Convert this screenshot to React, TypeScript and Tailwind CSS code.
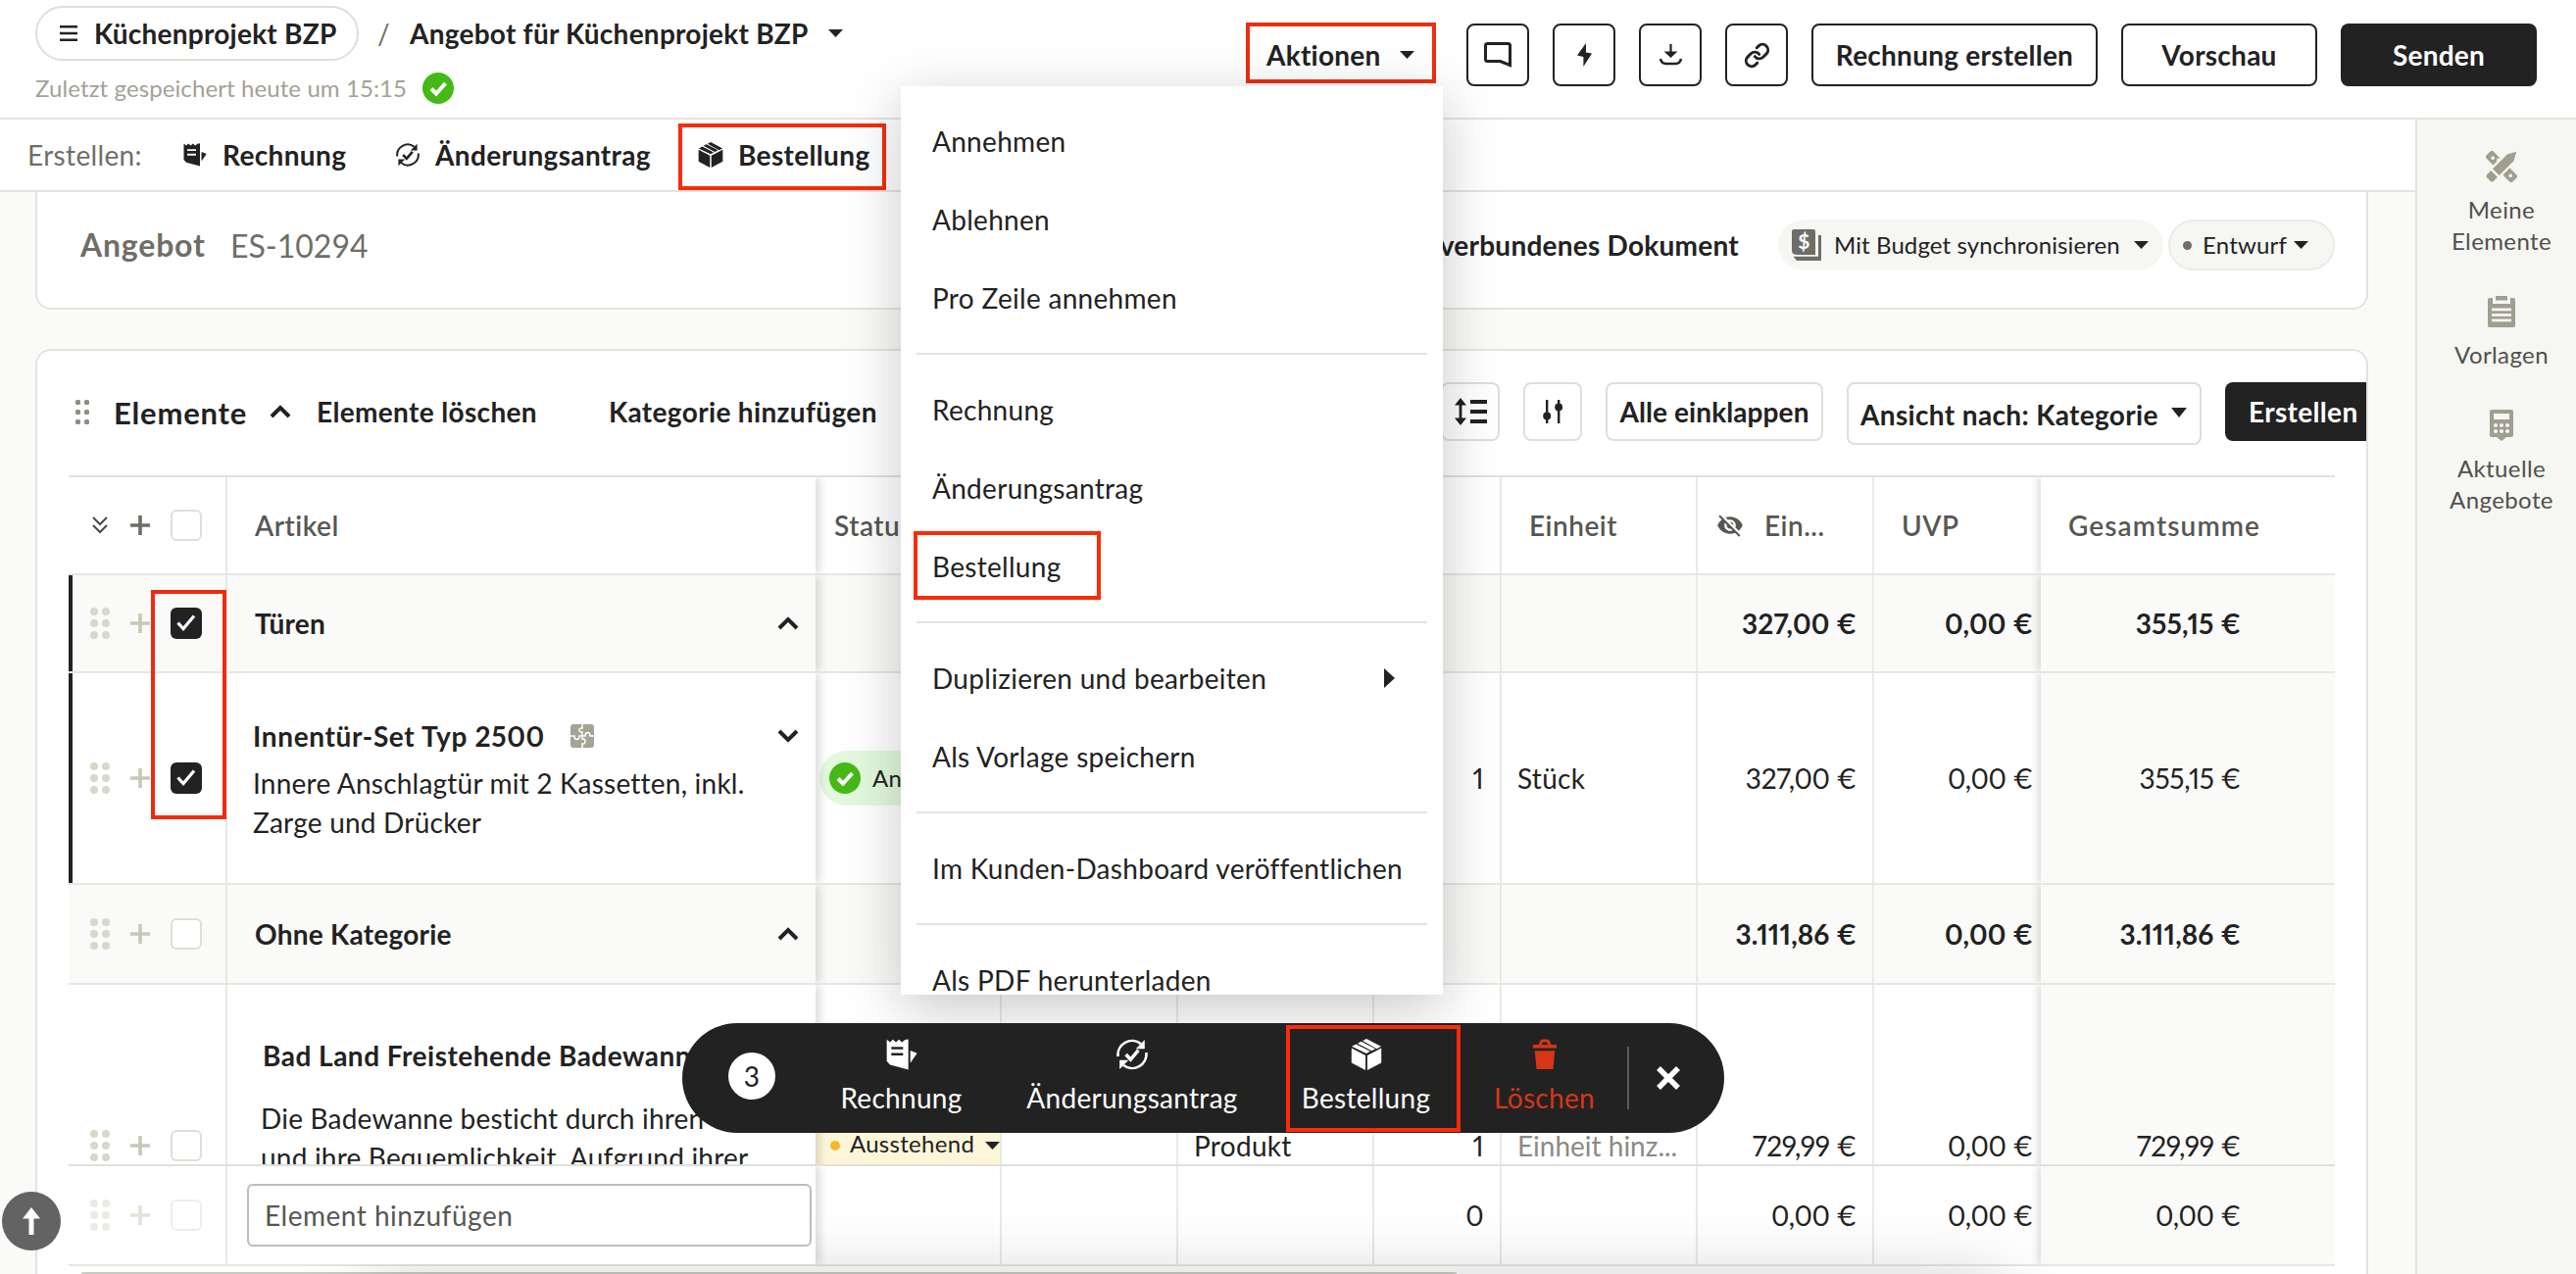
import type { ReactNode } from "react";
import clsx from "clsx";
import { Link } from "lucide-react";
import { MdVisibilityOff } from "react-icons/md";

type IconProps = { className?: string };

const Caret = ({ className = "" }: IconProps) => (
  <svg className={clsx("w-[15px] h-2 shrink-0", className)} viewBox="0 0 15 8" fill="currentColor">
    <path d="M0 0h15L7.5 8z" />
  </svg>
);

const Chevron = ({ down }: { down?: boolean }) => (
  <svg
    className={clsx("w-[22px] h-[14px] shrink-0", down && "rotate-180")}
    viewBox="0 0 22 14"
    fill="none"
    stroke="currentColor"
    strokeWidth="4"
  >
    <path d="M2 12l9-9 9 9" />
  </svg>
);

const CheckCircle = () => (
  <svg className="w-8 h-8 shrink-0" viewBox="0 0 32 32">
    <circle cx="16" cy="16" r="16" fill="#45b915" />
    <path d="M9 16.5l5 5 9.5-10.5" fill="none" stroke="#fff" strokeWidth="4" />
  </svg>
);

const ReceiptIcon = ({ className }: IconProps) => (
  <svg className={className} viewBox="0 0 24 24" fill="currentColor" fillRule="evenodd">
    <path d="M.5.5L3 2.6 5.2.5l2.3 2.1L9.8.5l2.3 2.1L14.5.8 17 .3V23.6L3 19.8.5 17zM4 6.2v1.9h9V6.2zm0 4.6v1.9h9v-1.9z" />
    <path d="M18.5 9l5.2 2-5.2 7.5z" />
  </svg>
);

const ChangeIcon = ({ className }: IconProps) => (
  <svg className={className} viewBox="0 0 24 24" fill="none" stroke="currentColor" strokeWidth="2">
    <path d="M1.200 13.500A10.800 10.800 0 0 1 18.600 3.800" />
    <path d="M22.800 10.500A10.800 10.800 0 0 1 5.400 20.200" />
    <path d="M7.200 12l3.600 3.800 6-7" strokeWidth="2.600" />
    <path d="M21.600.8v6.800h-6.800zM2.400 23.200v-6.800h6.800z" fill="currentColor" stroke="none" />
  </svg>
);

const BoxIcon = ({ className }: IconProps) => (
  <svg className={className} viewBox="0 0 24 24" fill="currentColor">
    <path d="M.8 5.9l3.300-1.800 10.800 5.500L12 11.300z" />
    <path d="M5.200 3.500L8 2.100l10.900 5.600-2.900 1.500z" />
    <path d="M9.100 1.500L12 0l11.200 5.900-3.200 1.700z" />
    <path d="M.6 7.200l10.700 5.500V24L.6 18.300z" />
    <path d="M23.400 7.200l-10.700 5.500V24l10.700-5.700z" />
  </svg>
);

const TrashIcon = ({ className }: IconProps) => (
  <svg className={className} viewBox="0 0 26 32" fill="currentColor" fillRule="evenodd">
    <path d="M1 6h5.500L8.500 1.800Q9 .6 10.300.6h5.400q1.300 0 1.800 1.200L19.500 6H25v3.600H1zM9.800 6h6.400l-1.100-2.400h-4.200zM2.800 12.200h20.400L21.500 31h-17z" />
  </svg>
);

const MessageIcon = () => (
  <svg className="w-7 h-[26px]" viewBox="0 0 28 26" fill="none" stroke="currentColor" strokeWidth="3">
    <path d="M3.500 1.500h21q2 0 2 2V23.500L16.500 19.500h-13q-2 0-2-2v-14q0-2 2-2z" />
  </svg>
);

const BoltIcon = () => (
  <svg className="w-[15px] h-6" viewBox="0 0 15 24" fill="currentColor">
    <path d="M9 0v9.400l6 1.100L6.400 24v-9.900L0 12.500z" />
  </svg>
);

const DownloadIcon = () => (
  <svg className="w-[23px] h-[22px]" viewBox="0 0 23 22" fill="none" stroke="currentColor" strokeWidth="2.200">
    <path d="M11.500 0v10" />
    <path d="M4.500 7.500h14l-7 6.500z" fill="currentColor" stroke="none" />
    <path d="M1 15q1 5 5.500 5h10q4.500 0 5.500-5" strokeWidth="2.600" />
  </svg>
);

const LineHeightIcon = () => (
  <svg className="w-[33px] h-7" viewBox="0 0 33 28" fill="currentColor">
    <path d="M6 0l6 7.500H7.400v13H12L6 28l-6-7.500h4.600v-13H0z" />
    <path d="M16 2h17v4H16zM16 12h17v4H16zM16 22h17v4H16z" />
  </svg>
);

const SlidersIcon = () => (
  <svg className="w-5 h-6" viewBox="0 0 20 24" fill="currentColor">
    <path d="M3 0h2.400v24H3zM15 0h2.400v24H15z" />
    <circle cx="4.200" cy="16.500" r="4" />
    <circle cx="16.200" cy="7.500" r="4" />
  </svg>
);

const LedgerIcon = () => (
  <svg className="w-[30px] h-8" viewBox="0 0 30 32" fill="#6e6e67">
    <path d="M2 0h20a2 2 0 0 1 2 2v24H6q-6 0-6-4V2a2 2 0 0 1 2-2z" />
    <path d="M27 6h3v26H5l-3.500-4.200H27z" />
    <text x="12.500" y="20" fontSize="21" fontWeight="700" fill="#fff" textAnchor="middle" fontFamily="Lato, sans-serif">
      $
    </text>
  </svg>
);

const PuzzleIcon = () => (
  <svg className="w-6 h-6" viewBox="0 0 24 24">
    <rect width="24" height="24" rx="3" fill="#a5a394" />
    <path
      d="M12 0v4q-3-.5-3 2t3 2v7q3-.5 3 2.500t-3 2.500v4M0 12h4q0 3.500 2.500 3.500T9 12h6q0-3.500 2.500-3.500T20 12h4"
      fill="none"
      stroke="#fff"
      strokeWidth="1.500"
    />
  </svg>
);

const PencilRulerIcon = () => (
  <svg className="w-8 h-8" viewBox="0 0 32 32" fill="#a09e8e">
    <g transform="rotate(45 16 16)">
      <rect x="-3" y="11" width="38" height="10" rx="2.500" />
      <circle cx="3.500" cy="16" r="1.800" fill="#f6f6f3" />
      <circle cx="9" cy="13.500" r="1.800" fill="#f6f6f3" />
      <circle cx="29" cy="16" r="1.800" fill="#f6f6f3" />
    </g>
    <g transform="rotate(45 16 16)">
      <path d="M9 -4h14v40H9z" fill="#f6f6f3" />
      <path d="M11.300 3L16-5.500 20.700 3v21h-9.400zM11.300 26.500h9.400V32q0 2.500-2.500 2.500h-4.400q-2.500 0-2.500-2.500z" />
    </g>
  </svg>
);

const ClipboardIcon = () => (
  <svg className="w-7 h-8" viewBox="0 0 28 32" fill="#a09e8e">
    <path
      fillRule="evenodd"
      d="M2 2h3v6h18V2h3a2 2 0 0 1 2 2v26a2 2 0 0 1-2 2H2a2 2 0 0 1-2-2V4a2 2 0 0 1 2-2zm2 10.500v2.800h20v-2.800zm0 5.500v2.800h20V18zm0 5.500v2.800h20v-2.800z"
    />
    <path d="M8 0h12v4.500H8z" />
  </svg>
);

const CalculatorIcon = () => (
  <svg className="w-6 h-8" viewBox="0 0 24 32">
    <path d="M2 0h20a2 2 0 0 1 2 2v24a2 2 0 0 1-2 2h-5l-5 4-5-4H2a2 2 0 0 1-2-2V2a2 2 0 0 1 2-2z" fill="#a09e8e" />
    <path d="M4 4h16v6H4z" fill="#f6f6f3" />
    {[6, 12, 18].map(x => (
      <g key={x} fill="#f6f6f3">
        <circle cx={x} cy="16" r="2.100" />
        <circle cx={x} cy="22" r="2.100" />
      </g>
    ))}
  </svg>
);

const SmallGrip = () => (
  <svg className="w-[14px] h-[25px]" viewBox="0 0 14 25" fill="#8f8d80">
    {[2.5, 12.5, 22.5].map(y => (
      <g key={y}>
        <rect x="0" y={y - 2.5} width="5" height="5" rx="1.500" />
        <rect x="9" y={y - 2.5} width="5" height="5" rx="1.500" />
      </g>
    ))}
  </svg>
);

const Grip = () => (
  <svg className="w-5 h-8" viewBox="0 0 20 32" fill="#d8d7ca">
    {[4, 16, 28].map(y => (
      <g key={y}>
        <circle cx="4" cy={y} r="4" />
        <circle cx="16" cy={y} r="4" />
      </g>
    ))}
  </svg>
);

const Plus = ({ className }: IconProps) => (
  <svg className={clsx("w-5 h-5", className)} viewBox="0 0 20 20" fill="currentColor">
    <path d="M8.200 0h3.600v8.200H20v3.600h-8.200V20H8.200v-8.200H0V8.200h8.200z" />
  </svg>
);

const DoubleChevron = () => (
  <svg className="w-4 h-[18px]" viewBox="0 0 16 18" fill="none" stroke="#4a4a46" strokeWidth="2">
    <path d="M1 1l7 7 7-7M1 9l7 7 7-7" />
  </svg>
);

const Checkbox = ({ checked }: { checked?: boolean }) =>
  checked ? (
    <div className="flex items-center justify-center w-8 h-8 rounded-md bg-[#222]">
      <svg className="w-5 h-5" viewBox="0 0 20 20" fill="none" stroke="#fff" strokeWidth="3.200">
        <path d="M1.500 9.500l5.500 6 11-13" />
      </svg>
    </div>
  ) : (
    <div className="w-8 h-8 bg-white border-2 rounded-md border-[#dfdfd5]" />
  );

const menuGroups: string[][] = [
  ["Annehmen", "Ablehnen", "Pro Zeile annehmen"],
  ["Rechnung", "Änderungsantrag", "Bestellung"],
  ["Duplizieren und bearbeiten", "Als Vorlage speichern"],
  ["Im Kunden-Dashboard veröffentlichen"],
  ["Als PDF herunterladen"]
];

function Header() {
  return (
    <header className="flex justify-between border-b-2 h-[122px] border-[#e4e4de] bg-white">
      <div className="pl-9 pt-[6px]">
        <div className="flex items-center font-bold tracking-[0.25px]">
          <div className="flex items-center border-2 h-14 w-[330px] rounded-[28px] border-[#dfdfd5] pl-[23px]">
            <svg className="h-4 mr-[17px] w-[18px]" viewBox="0 0 18 16" fill="#222">
              <path d="M0 0h18v2.500H0zM0 6.700h18v2.500H0zM0 13.400h18v2.500H0z" />
            </svg>
            Küchenprojekt BZP
          </div>
          <span className="ml-[19px] w-[33px] font-normal text-[#6e6e67]">/</span>
          <span className="w-[427px]">Angebot für Küchenprojekt BZP</span>
          <Caret />
        </div>
        <div className="flex items-center mt-3 text-2xl leading-8 text-[#a3a195]">
          <span className="w-[395px] tracking-[0.1px]">Zuletzt gespeichert heute um 15:15</span>
          <CheckCircle />
        </div>
      </div>
      <div className="flex items-start gap-6 pt-6 pr-10 font-bold tracking-[0.25px]">
        <div className="flex items-center -mt-px border-4 w-[194px] h-[62px] mr-[7px] border-[#ec2e12] pl-[17px] pt-1">
          <span className="w-[136px]">Aktionen</span>
          <Caret />
        </div>
        {[<MessageIcon />, <BoltIcon />, <DownloadIcon />, <Link className="w-[27px] h-[27px]" strokeWidth={2.6} />].map(
          (icon, i) => (
            <div className="flex items-center justify-center w-16 h-16 border-2 rounded-lg border-[#222]" key={i}>
              {icon}
            </div>
          )
        )}
        <button className="h-16 border-2 rounded-lg w-[292px] border-[#222]">Rechnung erstellen</button>
        <button className="h-16 border-2 rounded-lg w-[200px] border-[#222]">Vorschau</button>
        <button className="h-16 text-white rounded-lg w-[200px] bg-[#222]">Senden</button>
      </div>
    </header>
  );
}

function CreateBar() {
  return (
    <div className="flex items-center font-bold bg-white border-b-2 h-[74px] border-[#e4e4de] tracking-[0.35px] pl-7">
      <span className="font-normal w-[159px] text-[#6e6e67]">Erstellen:</span>
      <ReceiptIcon className="w-6 h-6 mr-4" />
      <span className="w-[177px]">Rechnung</span>
      <ChangeIcon className="w-6 h-6 mr-4" />
      <span className="w-[248px]">Änderungsantrag</span>
      <div className="flex items-center border-4 w-[212px] h-[68px] mt-1 border-[#f92b09] pl-4 pb-1">
        <BoxIcon className="h-[26px] w-[26px] mr-[15px]" />
        Bestellung
      </div>
    </div>
  );
}

function DocumentCard() {
  return (
    <section className="flex items-center bg-white border-2 border-t-0 h-[120px] w-[2380px] ml-9 rounded-b-2xl border-[#e4e4de] pl-[44px] pr-8 pb-[10px] text-[#222]">
      <span className="font-bold w-[153px] text-[32px] text-[#6e6e67] tracking-[0.8px]">Angebot</span>
      <span className="text-[#6e6e67] text-[32px] tracking-normal pt-[2px]">ES-10294</span>
      <span className="ml-auto font-bold mr-[40px] tracking-[0.25px]">verbundenes Dokument</span>
      <div className="flex items-center text-2xl rounded-full h-[52px] w-[393px] bg-[#f6f6f3] pl-[14px] mr-[5px]">
        <LedgerIcon />
        <span className="ml-[13px] w-[306px] whitespace-nowrap tracking-[0.1px]">Mit Budget synchronisieren</span>
        <Caret />
      </div>
      <div className="flex items-center text-2xl border-2 rounded-full h-[52px] w-[170px] border-[#ebebe6] bg-[#f6f6f3] pl-[13px]">
        <span className="w-[9px] h-[9px] rounded-full bg-[#6e6e67] mr-[11px]" />
        <span className="w-[93px] tracking-[0.2px]">Entwurf</span>
        <Caret />
      </div>
    </section>
  );
}

function ElementsToolbar() {
  return (
    <div className="flex items-start pt-8 font-bold h-[127px] pl-[39px] tracking-[0.35px]">
      <div className="flex items-center h-[60px]">
        <SmallGrip />
        <span className="ml-[25px] w-[159px] pt-[2px] text-[31px] tracking-[0.8px]">Elemente</span>
        <Chevron />
        <span className="ml-[26px] w-[298px]">Elemente löschen</span>
        <span>Kategorie hinzufügen</span>
      </div>
      <div className="flex items-start gap-6 ml-auto">
        <div className="flex items-center justify-center border-2 rounded-lg w-[60px] h-[60px] border-[#dfdfd5]">
          <LineHeightIcon />
        </div>
        <div className="flex items-center justify-center border-2 rounded-lg w-[60px] h-[60px] border-[#dfdfd5]">
          <SlidersIcon />
        </div>
        <div className="flex items-center justify-center border-2 rounded-lg w-[222px] h-[60px] border-[#dfdfd5] tracking-[0.1px]">
          Alle einklappen
        </div>
        <div className="flex items-center border-2 rounded-lg w-[362px] h-[64px] border-[#dfdfd5] pl-3 pt-px">
          <span className="w-[317px]">Ansicht nach: Kategorie</span>
          <svg className="w-4 h-[10px] -mt-1" viewBox="0 0 16 10" fill="#222">
            <path d="M0 0h16L8 10z" />
          </svg>
        </div>
        <div className="flex items-center text-white rounded-l-lg w-[144px] h-[60px] bg-[#222] pl-6">Erstellen</div>
      </div>
    </div>
  );
}

type RowProps = {
  height: string;
  group?: boolean;
  head?: boolean;
  selected?: boolean;
  controls: ReactNode;
  article: ReactNode;
  status?: ReactNode;
  kind?: ReactNode;
  amount?: ReactNode;
  unit?: ReactNode;
  price?: ReactNode;
  uvp?: ReactNode;
  sum?: ReactNode;
};

const cell = "flex items-center overflow-hidden whitespace-nowrap border-r-2 border-[#eaeae6]";

function Row({ height, group, head, selected, controls, article, status, kind, amount, unit, price, uvp, sum }: RowProps) {
  // plain rows set their figures a little tighter than the group totals
  const figures = !head && !group && "tracking-[-0.3px]";

  return (
    <div
      className={clsx(
        "grid grid-cols-[162px_600px_190px_180px_200px_130px_200px_180px_170px_300px] border-b-2 overflow-hidden border-[#e6e6e3] proportional-nums",
        height,
        group ? "bg-[#fafaf8] font-bold tracking-[0.1px]" : "bg-white",
        head && "font-semibold text-[#575752] tracking-[0.5px]"
      )}
    >
      <div
        className={clsx(
          "flex items-center border-r-2 border-r-[#eaeae6] border-l-4 pl-[18px]",
          selected ? "border-l-[#222]" : "border-l-transparent"
        )}
      >
        {controls}
      </div>
      <div className="relative z-10 bg-inherit shadow-[5px_0_8px_0_rgba(0,0,0,0.13)]">{article}</div>
      <div className={cell}>{status}</div>
      <div className={cell} />
      <div className={clsx(cell, "pl-4")}>{kind}</div>
      <div className={clsx(cell, "justify-end pr-4")}>{amount}</div>
      <div className={clsx(cell, head ? "pl-7" : "pl-4")}>{unit}</div>
      <div className={clsx(cell, figures, head ? "pl-[19px]" : "justify-end pr-4")}>{price}</div>
      <div className={clsx("flex items-center", figures, head ? "pl-7" : "justify-end pr-2")}>{uvp}</div>
      <div
        className={clsx(
          "relative flex items-center shadow-[-4px_0_7px_0_rgba(0,0,0,0.12)]",
          figures,
          head ? "bg-white pl-7" : "justify-end bg-[#fafaf8] pr-24"
        )}
      >
        {sum}
      </div>
    </div>
  );
}

function Controls({ checked, faded }: { checked?: boolean; faded?: boolean }) {
  return (
    <div className={clsx("flex items-center", faded && "opacity-50")}>
      <Grip />
      <Plus className="ml-[21px] mr-[21px] text-[#c9c7b6]" />
      <Checkbox checked={checked} />
    </div>
  );
}

const GroupTitle = ({ children }: { children: ReactNode }) => (
  <div className="flex items-center justify-between h-full pl-7 pr-[17px] tracking-[0.25px]">
    {children}
    <Chevron />
  </div>
);

function ElementsTable() {
  return (
    <div className="ml-8 border-t-2 w-[2312px] border-[#e0e0dc]">
      <Row
        head
        height="h-[100px]"
        controls={
          <div className="flex items-center pl-[2px]">
            <DoubleChevron />
            <Plus className="ml-[23px] mr-[21px] text-[#6e6e67]" />
            <Checkbox />
          </div>
        }
        article={<div className="flex items-center h-full pl-7">Artikel</div>}
        status={<span className="pl-[19px]">Status</span>}
        unit="Einheit"
        price={
          <>
            <MdVisibilityOff className="w-[28px] h-[28px] mr-[21px]" />
            Ein...
          </>
        }
        uvp="UVP"
        sum={<span className="tracking-[1.1px]">Gesamtsumme</span>}
      />
      <Row
        group
        selected
        height="h-[100px]"
        controls={<Controls checked />}
        article={<GroupTitle>Türen</GroupTitle>}
        price="327,00 €"
        uvp="0,00 €"
        sum="355,15 €"
      />
      <Row
        selected
        height="h-[216px]"
        controls={<Controls checked />}
        article={
          <div className="pl-[26px] pt-11 pr-[17px]">
            <div className="flex items-center font-bold h-10 tracking-[0.65px]">
              <span className="w-[324px]">Innentür-Set Typ 2500</span>
              <PuzzleIcon />
              <span className="ml-auto">
                <Chevron down />
              </span>
            </div>
            <p className="mt-2 leading-10 tracking-[0.22px]">
              Innere Anschlagtür mit 2 Kassetten, inkl.
              <br />
              Zarge und Drücker
            </p>
          </div>
        }
        status={
          <div className="flex items-center h-14 w-[180px] pl-[10px] ml-1 text-2xl rounded-full bg-[#e3f9de]">
            <CheckCircle />
            <span className="ml-3">An</span>
          </div>
        }
        amount="1"
        unit="Stück"
        price="327,00 €"
        uvp="0,00 €"
        sum="355,15 €"
      />
      <Row
        group
        height="h-[102px]"
        controls={<Controls />}
        article={<GroupTitle>Ohne Kategorie</GroupTitle>}
        price="3.111,86 €"
        uvp="0,00 €"
        sum="3.111,86 €"
      />
      {/* Last item is taller than the scroll area, so its cells are cut off */}
      <div className="overflow-hidden border-b-2 h-[185px] border-[#e0e0dc]">
        <Row
          height="h-[330px]"
          controls={<Controls />}
          article={
            <div className="pl-[34px] pt-[52px]">
              <div className="pl-[2px] font-bold leading-10 tracking-[0.5px]">Bad Land Freistehende Badewanne</div>
              <p className="mt-6 leading-10 tracking-[0.2px]">
                Die Badewanne besticht durch ihren
                <br />
                und ihre Bequemlichkeit. Aufgrund ihrer
              </p>
            </div>
          }
          status={
            <div className="flex items-center text-2xl h-[70px] w-full bg-[#fdf6d9] pl-[15px]">
              <span className="rounded-full w-[10px] h-[10px] bg-[#fbb52b] mr-[10px]" />
              <span className="-mt-1 w-[139px]">Ausstehend</span>
              <Caret />
            </div>
          }
          kind="Produkt"
          amount="1"
          unit={<span className="text-[#8a8a84] tracking-normal">Einheit hinz...</span>}
          price="729,99 €"
          uvp="0,00 €"
          sum="729,99 €"
        />
      </div>
      <Row
        height="h-[102px]"
        controls={<Controls faded />}
        article={
          <div className="flex items-center mt-[18px] ml-5 mr-1 border-2 rounded-md h-16 border-[#bcbcbc] bg-white pl-4 text-[#575752] tracking-[0.5px]">
            Element hinzufügen
          </div>
        }
        amount="0"
        price="0,00 €"
        uvp="0,00 €"
        sum="0,00 €"
      />
      <div className="h-2 mt-[6px] ml-3 rounded w-[1405px] bg-[#c9c9c5]" />
    </div>
  );
}

function Sidebar() {
  const item = "flex flex-col items-center gap-3 text-center";
  return (
    <aside className="flex flex-col gap-10 pt-8 pl-[10px] text-2xl leading-8 border-l-2 w-[164px] border-[#e4e4de] bg-[#f6f6f3] text-[#50504b] tracking-[0.4px]">
      <div className={item}>
        <PencilRulerIcon />
        <p>
          Meine
          <br />
          Elemente
        </p>
      </div>
      <div className={item}>
        <ClipboardIcon />
        <p>Vorlagen</p>
      </div>
      <div className={item}>
        <CalculatorIcon />
        <p>
          Aktuelle
          <br />
          Angebote
        </p>
      </div>
    </aside>
  );
}

function ActionsMenu() {
  return (
    <div className="absolute z-20 overflow-hidden whitespace-nowrap bg-white left-[919px] top-[88px] w-[553px] h-[927px] pt-4 shadow-[0_14px_56px_rgba(0,0,0,0.22)]">
      {menuGroups.map((group, i) => (
        <div key={i}>
          {i > 0 && <hr className="my-4 ml-4 border-0 h-[2px] w-[521px] bg-[#e4e4de]" />}
          {group.map(label => (
            <div className="relative flex items-center h-20 pl-8 pr-[49px] tracking-[0.3px]" key={label}>
              {label}
              {label === "Duplizieren und bearbeiten" && (
                <svg className="ml-auto w-[11px] h-5" viewBox="0 0 11 20" fill="#222">
                  <path d="M0 0l11 10L0 20z" />
                </svg>
              )}
              {label === "Bestellung" && (
                <div className="absolute border-4 left-[13px] top-1 w-[191px] h-[70px] border-[#f92b09]" />
              )}
            </div>
          ))}
        </div>
      ))}
    </div>
  );
}

function BulkBar() {
  const item = "flex flex-col items-center justify-between shrink-0 h-[78px]";
  return (
    <div className="absolute z-30 flex pt-4 text-white left-[696px] top-[1044px] w-[1063px] h-28 rounded-[56px] bg-[#222] pl-[47px]">
      <div className="flex items-center justify-center w-12 h-12 bg-white rounded-full mt-[14px] text-[#222]">3</div>
      <div className={clsx(item, "ml-[66px] w-[125px]")}>
        <ReceiptIcon className="w-8 h-8" />
        <span className="leading-9">Rechnung</span>
      </div>
      <div className={clsx(item, "ml-[65px] w-[216px]")}>
        <ChangeIcon className="w-8 h-8" />
        <span className="leading-9">Änderungsantrag</span>
      </div>
      <div className={clsx(item, "relative ml-[66px] w-[129px]")}>
        <BoxIcon className="w-8 h-8" />
        <span className="leading-9">Bestellung</span>
        <div className="absolute border-4 -left-[17px] -top-[14px] w-[178px] h-[109px] border-[#f92b09]" />
      </div>
      <div className={clsx(item, "ml-[66px] w-[103px] text-[#d63516]")}>
        <TrashIcon className="h-8 w-[26px]" />
        <span className="leading-9">Löschen</span>
      </div>
      <div className="h-16 mt-2 ml-[33px] w-[2px] bg-[#5c5c5c]" />
      <svg className="w-6 h-6 mt-7 ml-7" viewBox="0 0 24 24" stroke="#fff" strokeWidth="5.500">
        <path d="M2 2l20 20M22 2L2 22" />
      </svg>
    </div>
  );
}

export default function App() {
  return (
    <div className="relative overflow-hidden w-[2628px] h-[1300px] bg-[#fafaf8] text-[#222] text-[28px] leading-none tracking-[0.3px] font-['Lato',sans-serif]">
      <Header />
      <div className="flex h-[1178px]">
        <main className="w-[2464px]">
          <CreateBar />
          <DocumentCard />
          <section className="mt-10 overflow-hidden bg-white border-2 border-b-0 w-[2380px] h-[944px] ml-9 rounded-t-2xl border-[#e4e4de]">
            <ElementsToolbar />
            <ElementsTable />
          </section>
        </main>
        <Sidebar />
      </div>
      {/* shade of the panel that sits just under the fold */}
      <div className="absolute left-[380px] top-[1310px] w-[1660px] h-10 shadow-[0_0_70px_6px_rgba(0,0,0,0.2)]" />
      <div className="absolute z-20 border-4 left-[154px] top-[602px] w-[77px] h-[234px] border-[#f02b0c]" />
      <ActionsMenu />
      <BulkBar />
      <div className="absolute z-20 flex items-center justify-center rounded-full left-[2px] top-[1216px] w-[60px] h-[60px] bg-[#636363]">
        <svg className="w-[18px] h-7" viewBox="0 0 18 28" fill="#fff">
          <path d="M9 0l9 11.500h-6.500V28h-5V11.500H0z" />
        </svg>
      </div>
    </div>
  );
}
